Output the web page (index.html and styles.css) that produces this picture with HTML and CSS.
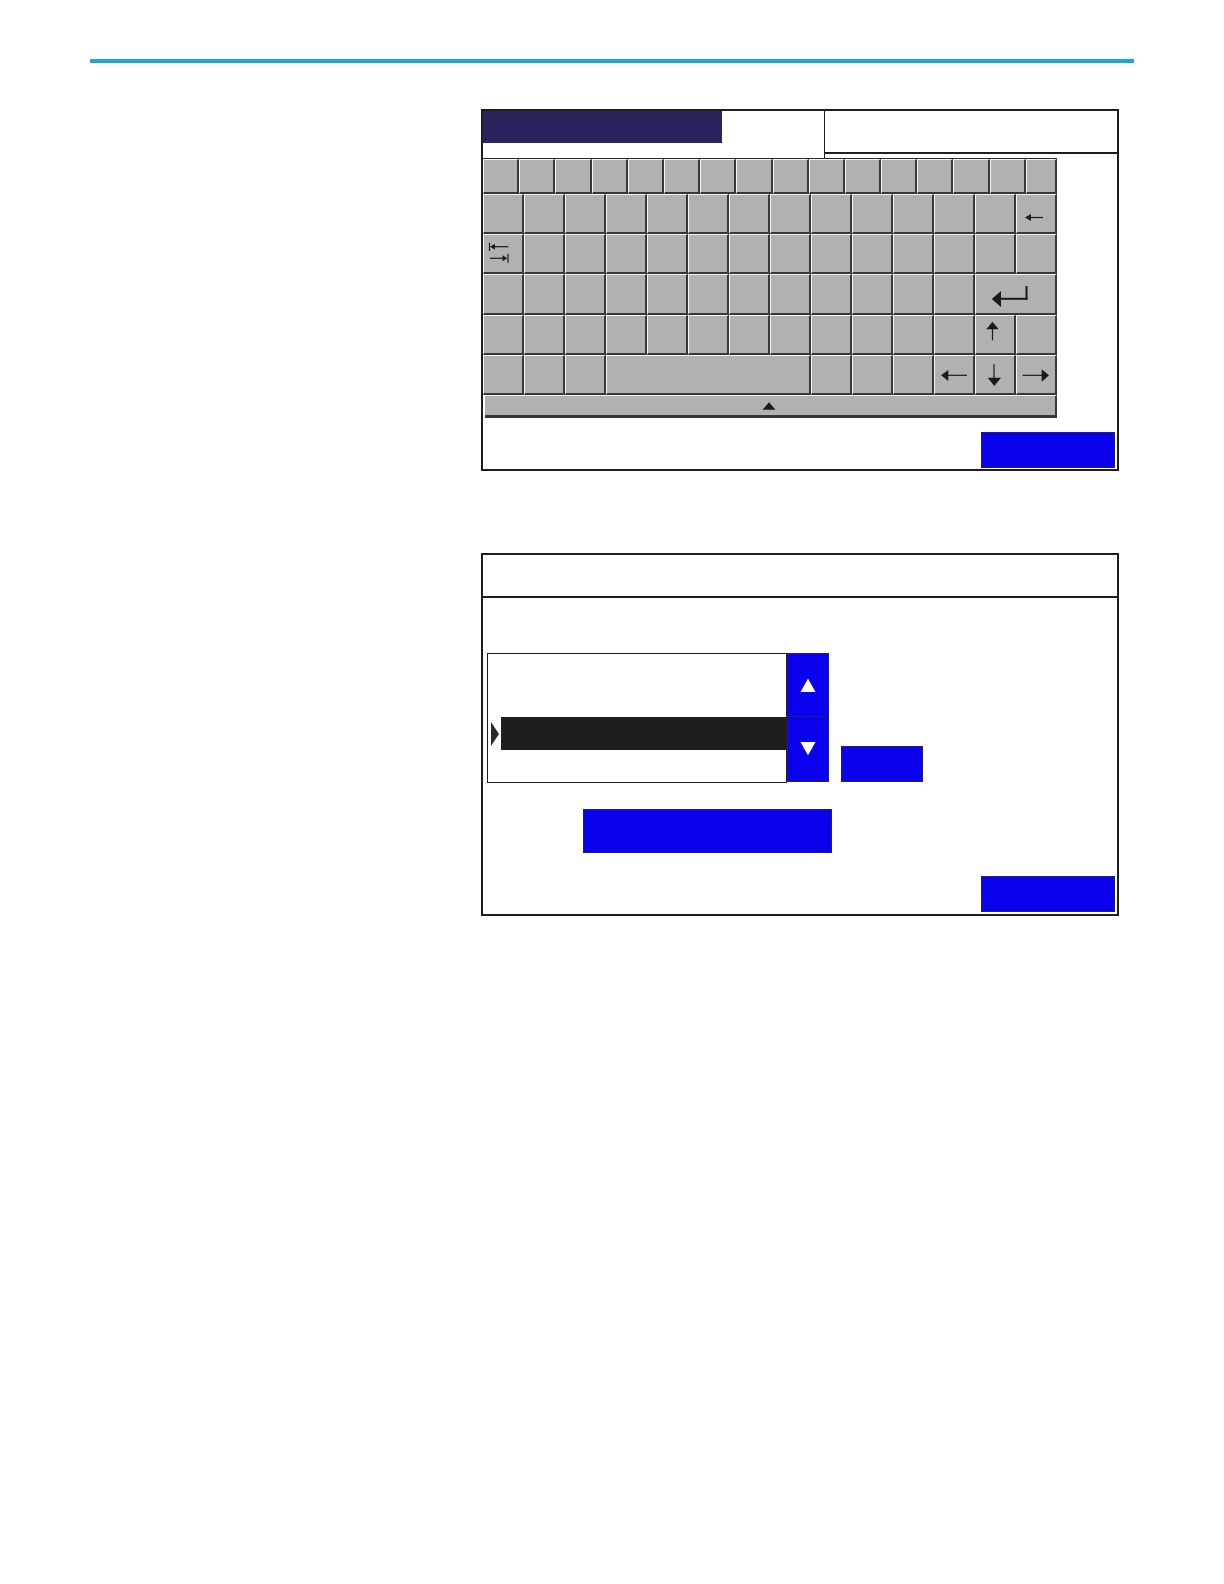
FILE: index.html
```html
<!DOCTYPE html>
<html lang="en">
<head>
<meta charset="utf-8">
<title>Keyboard and list screens</title>
<link rel="stylesheet" href="styles.css">
</head>
<body>
<div class="page">
  <div class="rule"></div>
  <div class="figures">
    <div class="panel kb-panel">
      <div class="kb-top">
        <div class="kb-title"><div class="title-bar"></div></div>
        <div class="kb-field"></div>
      </div>
      <div class="keyboard">
        <div class="row row1">
          <div class="key"></div><div class="key"></div><div class="key"></div><div class="key"></div>
          <div class="key"></div><div class="key"></div><div class="key"></div><div class="key"></div>
          <div class="key"></div><div class="key"></div><div class="key"></div><div class="key"></div>
          <div class="key"></div><div class="key"></div><div class="key"></div><div class="key"></div>
        </div>
        <div class="row">
          <div class="key"></div><div class="key"></div><div class="key"></div><div class="key"></div>
          <div class="key"></div><div class="key"></div><div class="key"></div><div class="key"></div>
          <div class="key"></div><div class="key"></div><div class="key"></div><div class="key"></div>
          <div class="key"></div>
          <div class="key"><svg width="38" height="37" viewBox="0 0 38 37"><line x1="13.5" y1="22.5" x2="26" y2="22.5" class="ln"/><polygon points="8,22.5 14,19 14,26" class="hd"/></svg></div>
        </div>
        <div class="row">
          <div class="key"><svg width="38" height="37" viewBox="0 0 38 37"><line x1="5.5" y1="7.7" x2="5.5" y2="16" class="ln"/><polygon points="6,11.7 11,8.7 11,14.7" class="hd"/><line x1="10.5" y1="11.7" x2="24.3" y2="11.7" class="ln"/><line x1="6" y1="23.3" x2="19" y2="23.3" class="ln"/><polygon points="23.3,23.3 18.5,20.3 18.5,26.3" class="hd"/><line x1="24" y1="18.7" x2="24" y2="27.7" class="ln"/></svg></div>
          <div class="key"></div><div class="key"></div><div class="key"></div><div class="key"></div>
          <div class="key"></div><div class="key"></div><div class="key"></div><div class="key"></div>
          <div class="key"></div><div class="key"></div><div class="key"></div><div class="key"></div>
          <div class="key"></div>
        </div>
        <div class="row tall">
          <div class="key"></div><div class="key"></div><div class="key"></div><div class="key"></div>
          <div class="key"></div><div class="key"></div><div class="key"></div><div class="key"></div>
          <div class="key"></div><div class="key"></div><div class="key"></div><div class="key"></div>
          <div class="key span2"><svg width="79" height="38" viewBox="0 0 79 38"><line x1="50.5" y1="11" x2="50.5" y2="24.8" class="ln2"/><line x1="24" y1="23.8" x2="51.5" y2="23.8" class="ln2"/><polygon points="15.7,24 25,16 25,32" class="hd"/></svg></div>
        </div>
        <div class="row">
          <div class="key"></div><div class="key"></div><div class="key"></div><div class="key"></div>
          <div class="key"></div><div class="key"></div><div class="key"></div><div class="key"></div>
          <div class="key"></div><div class="key"></div><div class="key"></div><div class="key"></div>
          <div class="key"><svg width="38" height="37" viewBox="0 0 38 37"><polygon points="16.5,5.7 10.3,13.3 22.7,13.3" class="hd"/><line x1="16.5" y1="13" x2="16.5" y2="24.3" class="ln"/></svg></div>
          <div class="key"></div>
        </div>
        <div class="row">
          <div class="key"></div><div class="key"></div><div class="key"></div>
          <div class="key span5"></div>
          <div class="key"></div><div class="key"></div><div class="key"></div>
          <div class="key"><svg width="38" height="37" viewBox="0 0 38 37"><polygon points="6,19.3 13.3,14 13.3,25" class="hd"/><line x1="13" y1="19.3" x2="32" y2="19.3" class="ln"/></svg></div>
          <div class="key"><svg width="38" height="37" viewBox="0 0 38 37"><line x1="18" y1="8.3" x2="18" y2="22" class="ln"/><polygon points="11.7,21.7 25,21.7 18.3,30" class="hd"/></svg></div>
          <div class="key"><svg width="38" height="37" viewBox="0 0 38 37"><line x1="5.7" y1="19.3" x2="25" y2="19.3" class="ln"/><polygon points="24.7,13.3 24.7,25.7 32,19.3" class="hd"/></svg></div>
        </div>
        <div class="kb-bar"><svg width="14" height="8" viewBox="0 0 14 8"><polygon points="0.5,7.8 13.5,7.8 7,0.2" class="hd"/></svg></div>
      </div>
      <div class="kb-foot"><div class="btn btn-ok"></div></div>
    </div>

    <div class="panel list-panel">
      <div class="lp-head"></div>
      <div class="lp-body">
        <div class="lp-list-row">
          <div class="listbox">
            <div class="sel">
              <svg class="marker" width="8" height="24" viewBox="0 0 8 24"><polygon points="0,0 8,12 0,24" fill="#2b2b2b"/></svg>
              <div class="sel-bar"></div>
            </div>
          </div>
          <div class="scroll">
            <div class="sbtn sbtn-up"><svg width="16" height="14" viewBox="0 0 16 14"><polygon points="0.5,14 15.5,14 8,0.5" fill="#ffffff"/></svg></div>
            <div class="sbtn sbtn-down"><svg width="16" height="14" viewBox="0 0 16 14"><polygon points="0.5,0 15.5,0 8,13.5" fill="#ffffff"/></svg></div>
          </div>
          <div class="btn btn-small"></div>
        </div>
        <div class="btn btn-wide"></div>
        <div class="lp-foot"><div class="btn btn-ok"></div></div>
      </div>
    </div>
  </div>
</div>
</body>
</html>
```

FILE: styles.css
```css
* {
  box-sizing: border-box;
}

body {
  margin: 0;
  background: #ffffff;
  font-family: "Liberation Sans", Arial, sans-serif;
}

.page {
  padding: 59px 90px 0;
}

.rule {
  height: 4px;
  background: #1fa4d9;
}

.figures {
  margin: 46px 0 0 391px;
  width: 638px;
}

.panel {
  width: 638px;
  border: 2px solid #1e1e1e;
  background: #ffffff;
}

.kb-panel {
  height: 362px;
}

.kb-top {
  display: flex;
  height: 47px;
}

.kb-title {
  width: 342px;
  border-right: 1px solid #1e1e1e;
}

.title-bar {
  width: 239px;
  height: 32px;
  background: #29235d;
}

.kb-field {
  flex: 1;
  height: 43px;
  border-bottom: 2px solid #1e1e1e;
}

.keyboard {
  width: 574px;
  border-top: 1px solid #2a2a2a;
}

.row {
  display: grid;
  grid-template-columns: repeat(14, 41px);
  height: 40px;
}

.row1 {
  grid-template-columns: repeat(15, 36.2px) 31px;
  height: 35px;
}

.row.tall {
  height: 41px;
}

.key {
  background: #b1b1b1;
  border-top: 1px solid #f4f4f4;
  border-left: 1px solid #f4f4f4;
  border-right: 2px solid #383838;
  border-bottom: 2px solid #383838;
}

.key svg {
  display: block;
  overflow: visible;
}

.span2 {
  grid-column: span 2;
}

.span5 {
  grid-column: span 5;
}

.ln {
  stroke: #1a1a1a;
  stroke-width: 1.2;
}

.ln2 {
  stroke: #1a1a1a;
  stroke-width: 2;
}

.hd {
  fill: #1a1a1a;
}

.kb-bar {
  margin-left: 2px;
  height: 23px;
  background: #b1b1b1;
  border-top: 1px solid #eeeeee;
  border-right: 2px solid #383838;
  border-bottom: 3px solid #383838;
  display: flex;
  align-items: center;
  justify-content: center;
}

.kb-bar svg {
  display: block;
  margin-right: 3px;
}

.kb-foot {
  height: 51px;
  display: flex;
  justify-content: flex-end;
  align-items: flex-end;
  padding: 0 2px 1px 0;
}

.btn {
  background: #0a02ee;
  border: 1px solid #231e78;
}

.btn-ok {
  width: 134px;
  height: 36px;
}

.list-panel {
  height: 363px;
  margin-top: 82px;
  display: flex;
  flex-direction: column;
}

.lp-head {
  flex: none;
  height: 43px;
  border-bottom: 2px solid #1e1e1e;
}

.lp-body {
  flex: 1;
  padding-top: 55px;
  display: flex;
  flex-direction: column;
}

.lp-list-row {
  display: flex;
  align-items: flex-end;
  margin-left: 4px;
  height: 130px;
}

.listbox {
  width: 300px;
  height: 130px;
  border: 1px solid #1e1e1e;
  padding-top: 63px;
}

.sel {
  display: flex;
  align-items: center;
  height: 33px;
}

.marker {
  display: block;
  margin-left: 3px;
}

.sel-bar {
  margin-left: 2px;
  flex: 1;
  height: 33px;
  background: #1e1e1e;
}

.scroll {
  align-self: flex-start;
  width: 42px;
  height: 129px;
  display: flex;
  flex-direction: column;
}

.sbtn {
  background: #0a02ee;
  border: 1px solid #231e78;
  display: flex;
  align-items: center;
  justify-content: center;
}

.sbtn svg {
  display: block;
}

.sbtn-up {
  height: 64px;
}

.sbtn-down {
  height: 65px;
  border-top: 0;
}

.btn-small {
  width: 82px;
  height: 36px;
  margin: 0 0 1px 12px;
}

.btn-wide {
  width: 249px;
  height: 44px;
  margin: 26px 0 0 100px;
}

.lp-foot {
  display: flex;
  justify-content: flex-end;
  margin-top: 23px;
  padding-right: 2px;
}
```
